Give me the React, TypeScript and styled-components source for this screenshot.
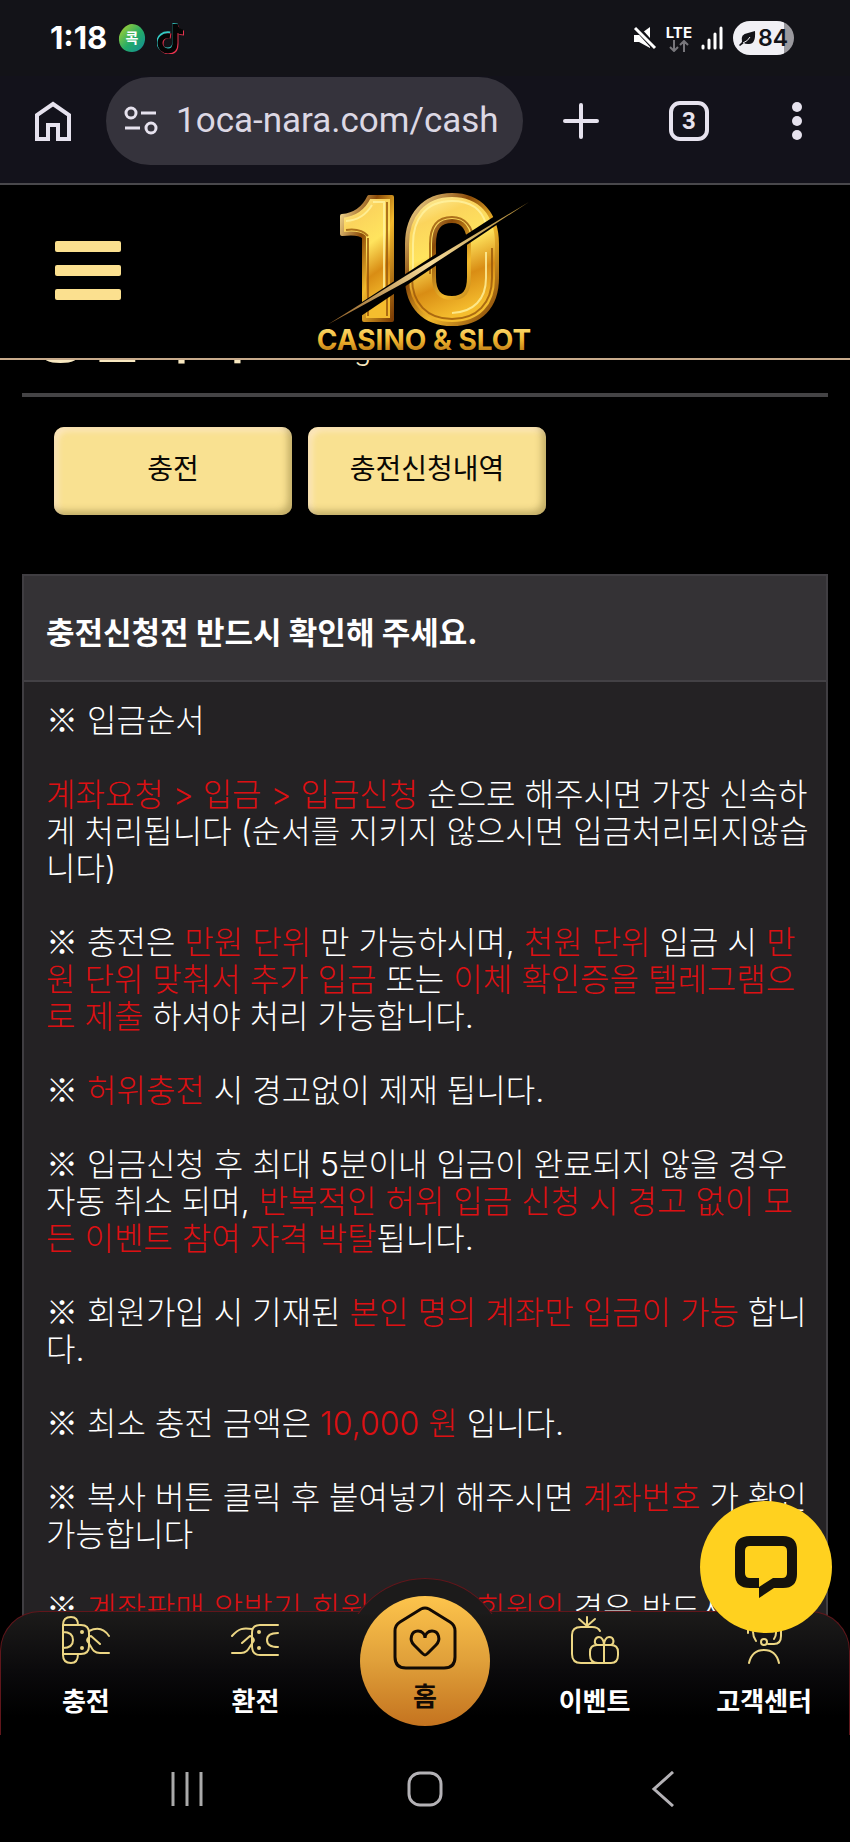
import React from 'react';
import styled, { createGlobalStyle } from 'styled-components';

const Global = createGlobalStyle`
  * { box-sizing: border-box; }
  body { margin: 0; background: #000; }
  button { border: 0; background: none; padding: 0; font: inherit; color: inherit; cursor: pointer; }
  a { color: inherit; text-decoration: none; }
`;

const Shell = styled.div`
  display: flex;
  flex-direction: column;
  height: 100vh;
  color: #fff;
  font-family: Inter, "Noto Sans CJK KR", sans-serif;
`;

const StatusBar = styled.div`
  display: flex;
  align-items: center;
  justify-content: space-between;
  height: 76px;
  padding: 0 56px 0 50px;
  background: #131318;
`;

const StatusGroup = styled.div<{ $gap: number }>`
  display: flex;
  align-items: center;
  gap: ${(p) => p.$gap}px;
`;

const Clock = styled.time`
  font: 700 31px/40px Inter, sans-serif;
`;

const Network = styled.div`
  display: flex;
  flex-direction: column;
  align-items: center;
  font: 700 15px/15px Inter, sans-serif;
`;

const Battery = styled.div`
  display: flex;
  align-items: center;
  justify-content: center;
  gap: 2px;
  width: 61px;
  height: 34px;
  border-radius: 17px;
  background: linear-gradient(90deg, #f1f0f5 84%, #9a999e 84%);
  color: #131318;
  font: 600 23px/34px Inter, sans-serif;
`;

const Toolbar = styled.header`
  display: flex;
  align-items: center;
  height: 109px;
  padding: 0 32px 18px 32px;
  border-bottom: 2px solid #49484c;
  background: #13121b;
  color: #e6e2ee;
`;

const ToolButton = styled.button`
  display: grid;
  place-items: center;
  width: 42px;
  height: 48px;
`;

const Address = styled.label`
  display: flex;
  align-items: center;
  gap: 18px;
  flex: 1;
  min-width: 0;
  height: 88px;
  margin: 0 37px 0 32px;
  padding: 0 18px;
  border-radius: 44px;
  background: #35333c;
`;

const AddressInput = styled.input`
  flex: 1;
  min-width: 0;
  padding: 0;
  border: 0;
  outline: 0;
  background: none;
  color: #dcd8e4;
  font: 400 35px/44px Roboto, sans-serif;
`;

const ToolGroup = styled.div`
  display: flex;
  gap: 66px;
`;

const Viewport = styled.main`
  position: relative;
  flex: 1;
  min-height: 0;
  overflow: hidden;
  background: #000;
`;

const SiteHeader = styled.header`
  display: grid;
  grid-template-columns: 1fr auto 1fr;
  align-items: center;
  height: 175px;
  padding: 0 55px;
  border-bottom: 2px solid #c9ab8c;
`;

const Menu = styled.button`
  display: grid;
  gap: 13px;
  width: 66px;
  padding-bottom: 3px;
  i { height: 11px; border-radius: 2px; background: #fbe08f; }
`;

const Content = styled.div`
  padding: 0 22px;
`;

const TitleRow = styled.div`
  display: flex;
  align-items: flex-end;
  gap: 16px;
  height: 37px;
  padding: 0 12px 30px;
  overflow: hidden;
  border-bottom: 4px solid #444345;
  color: #f8e8c0;
`;

const Title = styled.h1`
  flex: none;
  margin: 0;
  font: 500 58px/60px "Noto Sans CJK KR", sans-serif;
`;

const Subtitle = styled.span`
  margin-bottom: -3px;
  font: 300 28px/32px Inter, sans-serif;
`;

const Tabs = styled.nav`
  display: flex;
  gap: 16px;
  padding: 30px 32px 59px;
`;

const Tab = styled.button`
  width: 238px;
  height: 88px;
  border-radius: 10px;
  background: #f9e191;
  box-shadow: inset -4px -4px 7px rgba(90, 75, 20, 0.35), inset 4px 4px 6px rgba(255, 235, 220, 0.6);
  color: #0a0804;
  font-size: 28px;
  line-height: 37px;
  padding-bottom: 4px;
`;

const Panel = styled.section`
  border: 2px solid #403e42;
  background: #242224;
`;

const PanelTitle = styled.h2`
  margin: 0;
  padding: 38px 22px 29px;
  border-bottom: 2px solid #434145;
  background: #343235;
  font-size: 31px;
  line-height: 37px;
`;

const Notice = styled.div`
  padding: 20px 22px 200px;
  font-size: 32px;
  font-weight: 300;
  line-height: 37px;
  white-space: nowrap;
  p { margin: 0 0 37px; }
  em { font-style: normal; color: #dc1013; }
`;

const Mark = styled.span`
  font-family: "Noto Sans CJK KR", sans-serif;
  line-height: 1;
`;

const BottomNav = styled.nav`
  position: absolute;
  left: 0;
  right: 0;
  bottom: 0;
  height: 124px;
  display: grid;
  grid-template-columns: repeat(5, 1fr);
  border: 1px solid #61161b;
  border-bottom: 0;
  border-radius: 40px 40px 0 0;
  background: linear-gradient(#1c1b1a, #0a090b 50%, #000 85%);
`;

const NavLink = styled.a`
  display: flex;
  flex-direction: column;
  align-items: center;
  gap: 19px;
  padding-top: 4px;
  font-size: 26px;
  font-weight: 700;
  line-height: 37px;
`;

const Bump = styled.div`
  position: absolute;
  left: 50%;
  top: -34px;
  width: 164px;
  height: 36px;
  margin-left: -82px;
  overflow: hidden;
  &::before {
    content: "";
    display: block;
    height: 164px;
    border: 1px solid #61161b;
    border-radius: 50%;
    background: #1c1b1b;
  }
`;

const HomeLink = styled.a`
  position: absolute;
  left: 50%;
  top: -16px;
  display: flex;
  flex-direction: column;
  align-items: center;
  gap: 6px;
  width: 130px;
  height: 130px;
  margin-left: -65px;
  padding-top: 10px;
  border-radius: 50%;
  background: linear-gradient(#fdc44c, #e0a03a 50%, #c4731f);
  color: #120a04;
  font-size: 26px;
  font-weight: 700;
  line-height: 37px;
`;

const ChatButton = styled.button`
  position: absolute;
  right: 18px;
  bottom: 102px;
  display: grid;
  place-items: center;
  width: 132px;
  height: 132px;
  border-radius: 50%;
  background: #ffd11f;
`;

const SystemBar = styled.footer`
  display: grid;
  grid-template-columns: repeat(3, 1fr);
  align-items: center;
  justify-items: center;
  height: 107px;
  padding: 0 68px;
  background: #000;
`;

const Logo = () => (
  <svg width="220" height="164" viewBox="0 0 220 164" role="img" aria-label="10 Casino & Slot">
    <defs>
      <linearGradient id="gold" x1="0" y1="0" x2="0.3" y2="1">
        <stop offset="0" stopColor="#fff6b0" />
        <stop offset="0.25" stopColor="#fbd45c" />
        <stop offset="0.5" stopColor="#ffe45e" />
        <stop offset="0.75" stopColor="#d98d14" />
        <stop offset="1" stopColor="#f5bd2e" />
      </linearGradient>
      <linearGradient id="rim" x1="0" y1="0" x2="1" y2="1">
        <stop offset="0" stopColor="#ffe9a0" />
        <stop offset="0.35" stopColor="#8a4a08" />
        <stop offset="0.6" stopColor="#f2b92c" />
        <stop offset="1" stopColor="#7c3d05" />
      </linearGradient>
      <linearGradient id="word" x1="0" y1="0" x2="0" y2="1">
        <stop offset="0" stopColor="#ffe887" />
        <stop offset="0.5" stopColor="#f1b62f" />
        <stop offset="1" stopColor="#a8620c" />
      </linearGradient>
      <linearGradient id="blade" x1="0" y1="1" x2="1" y2="0">
        <stop offset="0" stopColor="#8d5a20" />
        <stop offset="0.5" stopColor="#f7dc9a" />
        <stop offset="1" stopColor="#a8802c" />
      </linearGradient>
    </defs>
    <g fill="url(#gold)" stroke="url(#rim)" strokeWidth="4" strokeLinejoin="round">
      <path d="M54 7 H77 V130 H49 V47 Q44 42 27 44 V26 Q46 24 54 7Z" />
      <path fillRule="evenodd" d="M137 5 C109 5 92 25 92 54 V88 C92 116 109 134 137 134 C166 134 182 116 182 88 V54 C182 24 165 5 137 5Z M137 31 C149 31 154 40 154 54 V87 C154 102 149 108 137 108 C124 108 119 101 119 87 V54 C119 39 124 31 137 31Z" />
    </g>
    <g fill="none" stroke="#9a570b" strokeWidth="2" opacity="0.8">
      <path d="M72 12V126M53 48V126M31 40Q46 38 53 46M177 58V88C177 113 162 129 137 129C112 129 97 113 97 88M115 84V54C115 37 122 27 137 27C150 27 158 37 158 50" />
    </g>
    <g fill="none" stroke="#fff3a0" strokeWidth="2" opacity="0.8">
      <path d="M58 12H69V100M31 31Q48 30 57 15M98 87V54C98 29 111 11 137 11C157 11 167 20 171 34M171 62V88C171 109 159 122 137 123" />
    </g>
    <path d="M44 114 L186 22 L186 32 L46 126Z" fill="#000" />
    <path d="M12 135 L92 85 L214 12 L94 90Z" fill="url(#blade)" />
    <text x="109" y="160" textAnchor="middle" fontFamily="Inter, sans-serif" fontWeight="700" fontSize="28" fill="url(#word)">CASINO &amp; SLOT</text>
  </svg>
);

const gold = { fill: 'none', stroke: '#ecd684', strokeWidth: 2, strokeLinecap: 'round', strokeLinejoin: 'round' } as const;

const DepositIcon = () => (
  <svg width="48" height="48" viewBox="0 0 48 48" {...gold}>
    <path d="M1 9V39Q1 47 9 47Q16 47 16 38M1 9Q1 1 9 1Q16 1 16 9M1 9H19Q27 9 27 17V30Q27 38 19 38H1M1 16Q11 16 11 24Q11 32 1 32" />
    <path d="M27 15C33 12 41 11 47 20M38 28L29 20C26 21 24 24 26 26C30 31 30 37 38 37H47" />
    <circle cx="20" cy="16" r="1" fill="#ecd684" /><circle cx="20" cy="32" r="1" fill="#ecd684" />
  </svg>
);

const WithdrawIcon = () => (
  <svg width="48" height="48" viewBox="0 0 48 48" {...gold}>
    <path d="M47 9H29Q21 9 21 17V30Q21 39 29 39H47M47 17Q36 17 36 24Q36 31 47 31" />
    <path d="M1 20C8 12 12 12 21 13M11 27L19 20C22 21 24 24 22 26C18 31 17 37 10 37H1" />
    <circle cx="28" cy="16" r="1" fill="#ecd684" /><circle cx="28" cy="32" r="1" fill="#ecd684" />
  </svg>
);

const EventIcon = () => (
  <svg width="48" height="48" viewBox="0 0 48 48" {...gold}>
    <path d="M29 15Q27 11 21 11H10Q1 11 1 19V38Q1 47 10 47H40Q47 47 47 39V36Q47 29 40 29H26Q19 29 19 36V39Q19 47 27 47M33 29V47M16 10V1M16 10L8 3M16 10L24 3" />
    <path d="M33 29H26C22 27 24 21 28 21C31 21 33 25 33 29C33 25 35 21 38 21C43 21 44 27 40 29" />
  </svg>
);

const SupportIcon = () => (
  <svg width="48" height="48" viewBox="0 0 48 48" {...gold}>
    <path d="M9 47Q12 34 24 34Q36 34 39 47M8 14V17M13 16Q13 21 16 25M36 12V17Q36 20 34 23M41 12V20Q41 28 34 28H28" />
    <circle cx="24" cy="26" r="3" />
  </svg>
);

export default function App() {
  return (
    <Shell>
      <Global />
      <StatusBar>
        <StatusGroup $gap={10}>
          <Clock>1:18</Clock>
          <svg width="30" height="30" viewBox="0 0 30 30">
            <defs><linearGradient id="app" x1="0" y1="0" x2="1" y2="1"><stop stopColor="#b7d52b" /><stop offset="0.55" stopColor="#23ab68" /><stop offset="1" stopColor="#128b9b" /></linearGradient></defs>
            <path d="M15 1C24 1 29 10 28 17C27 25 21 29 15 29C7 29 1 23 2 14C3 8 9 1 15 1Z" fill="url(#app)" />
            <text x="15" y="20" textAnchor="middle" fontFamily="Noto Sans CJK KR, sans-serif" fontWeight="700" fontSize="14" fill="#fff">콕</text>
          </svg>
          <svg width="28" height="32" viewBox="0 0 28 32" fill="none" strokeWidth="5">
            <path d="M13 13C6 12 2 16 2 21C2 26 6 29 10 29C15 29 18 26 18 21V2" transform="translate(0 -1)" stroke="#35c9c4" />
            <path d="M14 14C7 13 4 17 4 22C4 27 8 30 12 30C17 30 19 27 19 22V4C20 9 23 11 27 11" stroke="#e8344f" />
            <path d="M13 14C6 13 3 17 3 21C3 26 7 29 11 29C16 29 18 26 18 21V2C19 7 22 10 26 10" stroke="#050505" />
          </svg>
        </StatusGroup>
        <StatusGroup $gap={9}>
          <svg width="24" height="26" viewBox="0 0 24 26"><path d="M1 10H6L17 2V23L6 17H1Z" fill="#fff" /><path d="M2 1L23 24" stroke="#131318" strokeWidth="6" /><path d="M2 3L22 23" stroke="#fff" strokeWidth="3" /></svg>
          <Network>LTE<svg width="20" height="12" viewBox="0 0 20 12" fill="none" stroke="#77767b" strokeWidth="2"><path d="M5 0V11M1 7L5 11L9 7M15 12V1M11 5L15 1L19 5" /></svg></Network>
          <svg width="23" height="24" viewBox="0 0 23 24" stroke="#fff" strokeWidth="3" strokeLinecap="round"><path d="M2 20V22M8 14V22M14 8V22" /><path d="M20 2V22" /></svg>
          <Battery>
            <svg width="17" height="17" viewBox="0 0 17 17"><path d="M3 12Q1 4 9 3L16 1Q17 15 9 14Q6 14 5 13L1 16L0 15Z" fill="#131318" /><path d="M4 13Q9 11 11 7" stroke="#f1f0f5" fill="none" /></svg>
            84
          </Battery>
        </StatusGroup>
      </StatusBar>
      <Toolbar>
        <ToolButton aria-label="Home"><svg width="40" height="42" viewBox="0 0 40 42" fill="none" stroke="currentColor" strokeWidth="4"><path d="M4 39V15L20 4L36 15V39H25V25H15V39Z" /></svg></ToolButton>
        <Address>
          <svg width="34" height="30" viewBox="0 0 34 30" fill="none" stroke="currentColor" strokeWidth="3"><circle cx="7" cy="7" r="5" /><path d="M17 7H32M1 22H16" /><circle cx="27" cy="22" r="5" /></svg>
          <AddressInput aria-label="Address" defaultValue="1oca-nara.com/cash" />
        </Address>
        <ToolGroup>
          <ToolButton aria-label="New tab"><svg width="38" height="38" viewBox="0 0 38 38" stroke="currentColor" strokeWidth="4" strokeLinecap="round"><path d="M19 3V35M3 19H35" /></svg></ToolButton>
          <ToolButton aria-label="Tabs"><svg width="42" height="42" viewBox="0 0 42 42"><rect x="3" y="3" width="36" height="36" rx="9" fill="none" stroke="currentColor" strokeWidth="4" /><text x="21" y="29" textAnchor="middle" fontFamily="Roboto, sans-serif" fontSize="24" fontWeight="700" fill="currentColor">3</text></svg></ToolButton>
          <ToolButton aria-label="More"><svg width="12" height="38" viewBox="0 0 12 38" fill="currentColor"><circle cx="6" cy="5" r="5" /><circle cx="6" cy="19" r="5" /><circle cx="6" cy="33" r="5" /></svg></ToolButton>
        </ToolGroup>
      </Toolbar>
      <Viewport>
        <SiteHeader>
          <Menu aria-label="Menu"><i /><i /><i /></Menu>
          <Logo />
        </SiteHeader>
        <Content>
          <TitleRow><Title>충전하기</Title><Subtitle>Recharge</Subtitle></TitleRow>
          <Tabs><Tab>충전</Tab><Tab>충전신청내역</Tab></Tabs>
          <Panel>
            <PanelTitle>충전신청전 반드시 확인해 주세요.</PanelTitle>
            <Notice>
              <p><Mark>※</Mark> 입금순서</p>
              <p><em>계좌요청 &gt; 입금 &gt; 입금신청</em> 순으로 해주시면 가장 신속하<br />게 처리됩니다 (순서를 지키지 않으시면 입금처리되지않습<br />니다)</p>
              <p><Mark>※</Mark> 충전은 <em>만원 단위</em> 만 가능하시며, <em>천원 단위</em> 입금 시 <em>만<br />원 단위 맞춰서 추가 입금</em> 또는 <em>이체 확인증을 텔레그램으<br />로 제출</em> 하셔야 처리 가능합니다.</p>
              <p><Mark>※</Mark> <em>허위충전</em> 시 경고없이 제재 됩니다.</p>
              <p><Mark>※</Mark> 입금신청 후 최대 5분이내 입금이 완료되지 않을 경우<br />자동 취소 되며, <em>반복적인 허위 입금 신청 시 경고 없이 모<br />든 이벤트 참여 자격 박탈</em>됩니다.</p>
              <p><Mark>※</Mark> 회원가입 시 기재된 <em>본인 명의 계좌만 입금이 가능</em> 합니<br />다.</p>
              <p><Mark>※</Mark> 최소 충전 금액은 <em>10,000 원</em> 입니다.</p>
              <p><Mark>※</Mark> 복사 버튼 클릭 후 붙여넣기 해주시면 <em>계좌번호</em> 가 확인<br />가능합니다</p>
              <p><Mark>※</Mark> <em>계좌판매 악받기 회원 동일한 회원의</em> 경우 반드시</p>
            </Notice>
          </Panel>
        </Content>
        <BottomNav>
          <NavLink href="#deposit"><DepositIcon />충전</NavLink>
          <NavLink href="#withdraw"><WithdrawIcon />환전</NavLink>
          <span />
          <NavLink href="#event"><EventIcon />이벤트</NavLink>
          <NavLink href="#support"><SupportIcon />고객센터</NavLink>
          <Bump />
          <HomeLink href="#home">
            <svg width="64" height="66" viewBox="0 0 64 66" fill="none" stroke="#120a04" strokeWidth="3"><path d="M28 3Q32 1 36 3L57 16Q62 19 62 25V51Q62 62 51 62H13Q2 62 2 51V25Q2 19 7 16Z" /><path d="M32 49Q31 49 29 47L21 39C16 34 18 25 25 25C29 25 32 28 32 32C32 28 35 25 39 25C46 25 48 34 43 39L35 47Q33 49 32 49Z" /></svg>
            홈
          </HomeLink>
        </BottomNav>
        <ChatButton aria-label="Chat"><svg width="62" height="62" viewBox="0 0 62 62"><path fillRule="evenodd" fill="#15130c" d="M15 0H48Q62 0 62 14V38Q62 52 48 52H39L24 62V52H15Q0 52 0 38V14Q0 0 15 0ZM15 10Q10 10 10 15V37Q10 42 15 42H24V51L38 42H47Q52 42 52 37V15Q52 10 47 10Z" /></svg></ChatButton>
      </Viewport>
      <SystemBar>
        <ToolButton aria-label="Recent apps"><svg width="34" height="36" viewBox="0 0 34 36" stroke="#aaa" strokeWidth="3"><path d="M3 1V35M17 1V35M31 1V35" /></svg></ToolButton>
        <ToolButton aria-label="Home screen"><svg width="36" height="36" viewBox="0 0 36 36"><rect x="2" y="2" width="32" height="32" rx="11" fill="none" stroke="#b4b2b6" strokeWidth="3" /></svg></ToolButton>
        <ToolButton aria-label="Back"><svg width="24" height="36" viewBox="0 0 24 36" fill="none" stroke="#b4b2b6" strokeWidth="3"><path d="M22 1L3 18L22 35" /></svg></ToolButton>
      </SystemBar>
    </Shell>
  );
}
